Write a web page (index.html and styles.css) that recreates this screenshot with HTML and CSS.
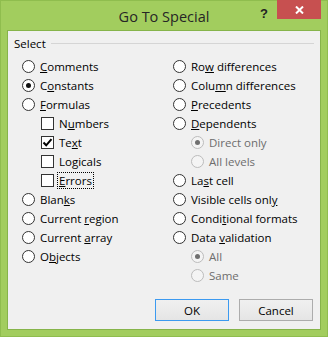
FILE: index.html
```html
<!DOCTYPE html>
<html lang="en">
<head>
    <meta charset="UTF-8">
    <meta name="viewport" content="width=device-width, initial-scale=1.0">
    <title>Go To Special</title>
    <link rel="stylesheet" href="styles.css">
</head>
<body>
    <div class="window">
        <div class="titlebar">
            <span></span>
            <span class="title">Go To Special</span>
            <div class="controls">
                <span class="help">?</span>
                <span class="close">
                    <svg width="9" height="8" viewBox="0 0 9 8">
                        <path d="M1 0.5 L8 7.5 M8 0.5 L1 7.5" stroke="#fff" stroke-width="2" fill="none"/>
                    </svg>
                </span>
            </div>
        </div>

        <div class="client">
            <div class="group-head">
                <span>Select</span>
                <span class="rule"></span>
            </div>

            <div class="options">
                <div class="col">
                    <div class="opt"><span class="radio"></span><span class="label"><u>C</u>omments</span></div>
                    <div class="opt"><span class="radio checked"></span><span class="label">C<u>o</u>nstants</span></div>
                    <div class="opt"><span class="radio"></span><span class="label"><u>F</u>ormulas</span></div>
                    <div class="opt sub"><span class="check"></span><span class="label">N<u>u</u>mbers</span></div>
                    <div class="opt sub">
                        <span class="check">
                            <svg width="11" height="11" viewBox="0 0 11 11">
                                <path d="M1.5 5.5 L4.2 8.3 L9.5 2.2" stroke="#000" stroke-width="2" fill="none"/>
                            </svg>
                        </span>
                        <span class="label">Te<u>x</u>t</span>
                    </div>
                    <div class="opt sub"><span class="check"></span><span class="label">Lo<u>g</u>icals</span></div>
                    <div class="opt sub"><span class="check"></span><span class="label focus"><u>E</u>rrors</span></div>
                    <div class="opt"><span class="radio"></span><span class="label">Blan<u>k</u>s</span></div>
                    <div class="opt"><span class="radio"></span><span class="label">Current <u>r</u>egion</span></div>
                    <div class="opt"><span class="radio"></span><span class="label">Current <u>a</u>rray</span></div>
                    <div class="opt"><span class="radio"></span><span class="label">O<u>b</u>jects</span></div>
                </div>
                <div class="col">
                    <div class="opt"><span class="radio"></span><span class="label">Ro<u>w</u> differences</span></div>
                    <div class="opt"><span class="radio"></span><span class="label">Colu<u>m</u>n differences</span></div>
                    <div class="opt"><span class="radio"></span><span class="label"><u>P</u>recedents</span></div>
                    <div class="opt"><span class="radio"></span><span class="label"><u>D</u>ependents</span></div>
                    <div class="opt sub disabled"><span class="radio checked"></span><span class="label">Direct only</span></div>
                    <div class="opt sub disabled"><span class="radio"></span><span class="label">All levels</span></div>
                    <div class="opt"><span class="radio"></span><span class="label">La<u>s</u>t cell</span></div>
                    <div class="opt"><span class="radio"></span><span class="label">Visible cells onl<u>y</u></span></div>
                    <div class="opt"><span class="radio"></span><span class="label">Condi<u>t</u>ional formats</span></div>
                    <div class="opt"><span class="radio"></span><span class="label">Data <u>v</u>alidation</span></div>
                    <div class="opt sub disabled"><span class="radio checked"></span><span class="label">All</span></div>
                    <div class="opt sub disabled"><span class="radio"></span><span class="label">Same</span></div>
                </div>
            </div>

            <div class="buttons">
                <button class="btn default">OK</button>
                <button class="btn">Cancel</button>
            </div>
        </div>
    </div>
</body>
</html>
```

FILE: styles.css
```css
body {
    margin: 0;
    font-family: "Open Sans", "Noto Sans", sans-serif;
    font-size: 11.5px;
    color: #000;
}
.window {
    box-sizing: border-box;
    width: 328px;
    height: 337px;
    background-color: #a2cd5e;
    border: 1px solid #8fbd4e;
    display: flex;
    flex-direction: column;
}
.titlebar {
    height: 29px;
    display: grid;
    grid-template-columns: 1fr auto 1fr;
    align-items: center;
}
.title {
    font-size: 14.5px;
    color: #262626;
    padding-top: 1px;
}
.controls {
    align-self: start;
    display: flex;
    justify-content: flex-end;
    align-items: flex-start;
    padding-right: 6px;
}
.help {
    font-family: "Liberation Sans", sans-serif;
    font-weight: bold;
    font-size: 13px;
    color: #222;
    margin-top: 5px;
    margin-right: 9px;
}
.close {
    width: 44px;
    height: 19px;
    margin-top: -1px;
    background-color: #c75050;
    display: flex;
    align-items: center;
    justify-content: center;
}
.client {
    margin: 0 6px 6px;
    flex: 1;
    background-color: #f0f0f0;
    border: 1px solid #86b44a;
    display: flex;
    flex-direction: column;
}
.group-head {
    display: flex;
    align-items: center;
    height: 26px;
    padding: 0 6px;
}
.group-head span:first-child {
    margin-top: -2px;
}
.rule {
    flex: 1;
    height: 1px;
    background-color: #d5d5d5;
    margin-left: 5px;
    margin-top: -1px;
}
.options {
    display: grid;
    grid-template-columns: 151px 1fr;
    padding-left: 14px;
}
.opt {
    height: 19px;
    display: flex;
    align-items: center;
}
.opt.sub {
    padding-left: 19px;
}
.col:last-child .opt.sub {
    padding-left: 18px;
}
.label {
    margin-left: 5px;
    white-space: nowrap;
}
.label u {
    text-underline-offset: 1px;
}
.disabled .label {
    color: #6d6d6d;
}
.focus {
    margin-left: 3px;
    padding: 0 1px;
    line-height: 15px;
    border: 1px dotted #000;
}
.radio {
    box-sizing: border-box;
    width: 13px;
    height: 13px;
    border-radius: 50%;
    border: 1px solid #333;
    background-color: #fff;
    display: flex;
    align-items: center;
    justify-content: center;
    flex-shrink: 0;
}
.radio.checked::after {
    content: "";
    width: 5px;
    height: 5px;
    border-radius: 50%;
    background-color: #111;
}
.disabled .radio {
    border-color: #bcbcbc;
    background-color: #f4f4f4;
}
.disabled .radio.checked::after {
    background-color: #6f6f6f;
}
.check {
    box-sizing: border-box;
    width: 13px;
    height: 13px;
    border: 1px solid #333;
    background-color: #fff;
    flex-shrink: 0;
    display: flex;
    align-items: center;
    justify-content: center;
}
.buttons {
    display: flex;
    justify-content: flex-end;
    gap: 10px;
    margin-top: 14px;
    padding-right: 7px;
}
.btn {
    box-sizing: border-box;
    width: 74px;
    height: 22px;
    font-family: inherit;
    font-size: 11.5px;
    color: #000;
    border: 1px solid #acacac;
    background: linear-gradient(#f0f0f0, #e5e5e5);
    padding: 0;
}
.btn.default {
    border-color: #3c9af0;
}
```
